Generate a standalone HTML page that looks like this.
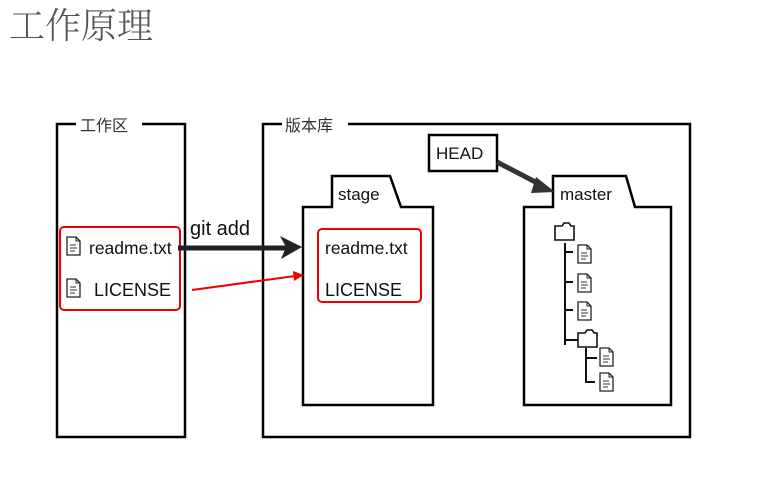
<!DOCTYPE html>
<html><head><meta charset="utf-8"><style>
html,body{margin:0;padding:0;background:#fff;width:758px;height:497px;overflow:hidden}
svg{display:block}
text{font-family:"Liberation Sans","Noto Sans CJK SC",sans-serif;fill:#111}
</style></head><body>
<svg width="758" height="497" viewBox="0 0 758 497" xmlns="http://www.w3.org/2000/svg">
<defs>
<g id="file">
<path d="M0 0 H9 L13 4 V18 H0 Z" fill="#fff" stroke="#222" stroke-width="1.3"/>
<path d="M9 0 V4 H13" fill="none" stroke="#222" stroke-width="1"/>
<path d="M3 8 H9 M3 11 H10 M3 14 H8" stroke="#333" stroke-width="1"/>
</g>
<g id="folder">
<path d="M0 3 H7 L9 0 H14 L16 3 H19 V17 H0 Z" fill="#fff" stroke="#111" stroke-width="1.6"/>
</g>
</defs>
<text x="9" y="38" style="font-family:'Noto Serif CJK SC',serif;font-weight:300;font-size:36px;fill:#555">工作原理</text>

<g fill="none" stroke="#000" stroke-width="2.5">
<path d="M76 124 H57 V437 H185 V124 H142"/>
<path d="M282 124 H263 V437 H690 V124 H348"/>
<path d="M303 207 H332 V176 H390 L401 207 H433 V405 H303 Z"/>
<path d="M524 207 H553 V176 H626 L635 207 H671 V405 H524 Z"/>
<rect x="429" y="135" width="68" height="36"/>
</g>
<text x="80" y="131" font-size="16" style="fill:#333">工作区</text>
<text x="285" y="131" font-size="16" style="fill:#333">版本库</text>
<text x="338" y="200" font-size="17">stage</text>
<text x="560" y="200" font-size="17">master</text>
<text x="436" y="159" font-size="17">HEAD</text>

<rect x="60" y="227" width="120" height="83" rx="4" fill="none" stroke="#e00" stroke-width="2"/>
<rect x="318" y="229" width="103" height="73" rx="4" fill="none" stroke="#e00" stroke-width="2"/>
<use href="#file" x="67" y="237"/>
<use href="#file" x="67" y="279"/>
<text x="89" y="254" font-size="17.5">readme.txt</text>
<text x="94" y="296" font-size="18">LICENSE</text>
<text x="325" y="254" font-size="17.5">readme.txt</text>
<text x="325" y="296" font-size="18">LICENSE</text>
<text x="190" y="235" font-size="20">git add</text>

<path d="M178 248 H288" stroke="#222" stroke-width="5"/>
<path d="M280 236 L302 247 L281 259 L286 247 Z" fill="#222"/>
<path d="M192 290 L295 276" stroke="#e00" stroke-width="2"/>
<path d="M293 271 L304 275 L294 281 Z" fill="#e00"/>
<path d="M497 162 L543 186" stroke="#333" stroke-width="5"/>
<path d="M536 177 L555 192 L531 193 Z" fill="#333"/>

<g stroke="#111" stroke-width="2" fill="none">
<path d="M565 243 V345 M565 252 H573 M565 282 H573 M565 310 H573 M565 340 H578"/>
<path d="M586 348 V382 H595 M586 358 H597"/>
</g>
<use href="#folder" x="555" y="223"/>
<use href="#file" x="578" y="245"/>
<use href="#file" x="578" y="274"/>
<use href="#file" x="578" y="302"/>
<use href="#folder" x="578" y="330"/>
<use href="#file" x="600" y="348"/>
<use href="#file" x="600" y="373"/>
</svg>
</body></html>
